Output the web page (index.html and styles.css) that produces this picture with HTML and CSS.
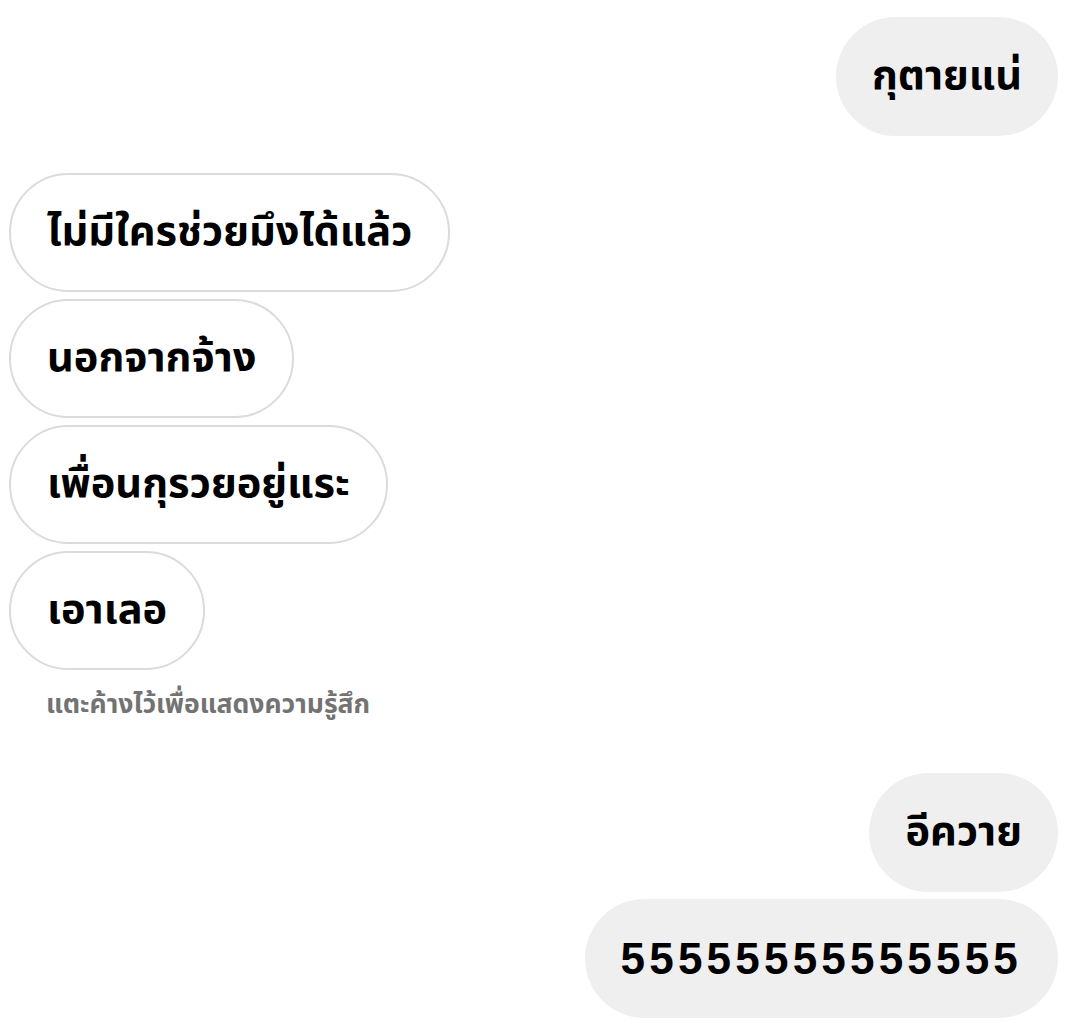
FILE: index.html
```html
<!DOCTYPE html>
<html lang="th">
<head>
<meta charset="utf-8">
<link rel="stylesheet" href="styles.css">
</head>
<body>
<div class="chat">
  <div class="row out first"><div class="bubble sent">กุตายแน่</div></div>
  <div class="group">
    <div class="row in"><div class="bubble recv">ไม่มีใครช่วยมึงได้แล้ว</div></div>
    <div class="row in"><div class="bubble recv">นอกจากจ้าง</div></div>
    <div class="row in"><div class="bubble recv">เพื่อนกุรวยอยู่แระ</div></div>
    <div class="row in"><div class="bubble recv">เอาเลอ</div></div>
    <div class="hint">แตะค้างไว้เพื่อแสดงความรู้สึก</div>
  </div>
  <div class="group2">
    <div class="row out"><div class="bubble sent">อีควาย</div></div>
    <div class="row out"><div class="bubble sent num">55555555555555</div></div>
  </div>
</div>
</body>
</html>
```
FILE: styles.css
```css
html, body { margin: 0; padding: 0; background: #ffffff; }
body {
  font-family: "Noto Sans Thai", "Noto Sans", "Liberation Sans", sans-serif;
  color: #000;
}
.chat {
  width: 1083px;
  padding: 17px 25px 0 9px;
  box-sizing: border-box;
  display: flex;
  flex-direction: column;
}
.row { display: flex; }
.row.out { justify-content: flex-end; }
.row.in { justify-content: flex-start; }
.group { display: flex; flex-direction: column; gap: 7px; margin-top: 37px; }
.group2 { display: flex; flex-direction: column; gap: 7px; margin-top: 48px; }
.bubble {
  box-sizing: border-box;
  height: 119px;
  border-radius: 60px;
  padding: 0 36px;
  display: flex;
  align-items: center;
  font-size: 41.5px;
  font-weight: 700;
  white-space: nowrap;
}
.sent { background: #efefef; }
.recv { border: 2.5px solid #dbdbdb; background: #fff; }
.num { font-family: "Liberation Sans", Arial, sans-serif; font-size: 44px; letter-spacing: 4.2px; padding-left: 36px; }
.hint {
  margin: 8px 0 0 37px;
  font-size: 26.5px;
  font-weight: 700;
  color: #737373;
}
```
